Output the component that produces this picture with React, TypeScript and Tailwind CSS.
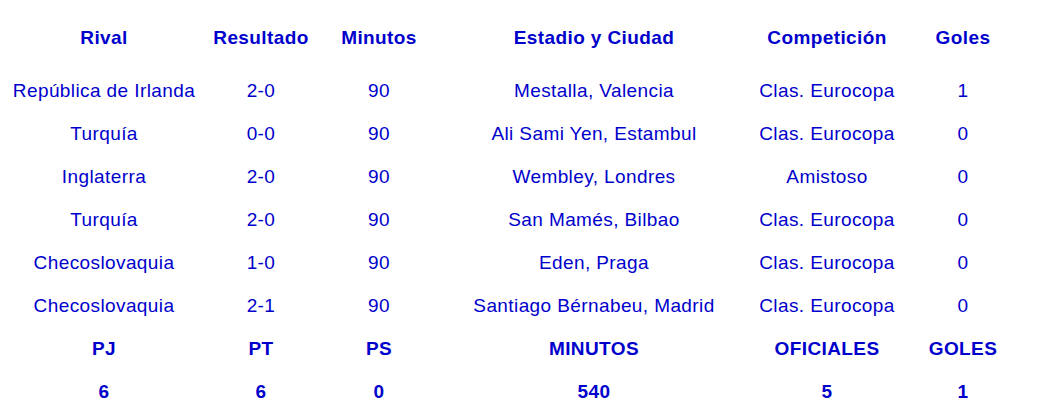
const header = ["Rival", "Resultado", "Minutos", "Estadio y Ciudad", "Competición", "Goles"];

const rows = [
  ["República de Irlanda", "2-0", "90", "Mestalla, Valencia", "Clas. Eurocopa", "1"],
  ["Turquía", "0-0", "90", "Ali Sami Yen, Estambul", "Clas. Eurocopa", "0"],
  ["Inglaterra", "2-0", "90", "Wembley, Londres", "Amistoso", "0"],
  ["Turquía", "2-0", "90", "San Mamés, Bilbao", "Clas. Eurocopa", "0"],
  ["Checoslovaquia", "1-0", "90", "Eden, Praga", "Clas. Eurocopa", "0"],
  ["Checoslovaquia", "2-1", "90", "Santiago Bérnabeu, Madrid", "Clas. Eurocopa", "0"],
];

const totalsHead = ["PJ", "PT", "PS", "MINUTOS", "OFICIALES", "GOLES"];
const totals = ["6", "6", "0", "540", "5", "1"];

const cols = "grid grid-cols-[208px_106px_130px_300px_166px_106px]";

function Row({ cells, bold, height }: { cells: string[]; bold?: boolean; height: string }) {
  return (
    <div className={`${cols} ${height} items-center`}>
      {cells.map((c, i) => (
        <div key={i} className={`text-center whitespace-nowrap ${bold ? "font-bold" : ""}`}>
          {c}
        </div>
      ))}
    </div>
  );
}

export default function App() {
  return (
    <div
      className="w-[1052px] h-[416px] bg-white text-[#0000cc] text-[19px] leading-none tracking-[0.4px] pt-[16px]"
      style={{ fontFamily: '"Liberation Sans", Arial, sans-serif' }}
    >
      <Row cells={header} bold height="h-[43px]" />
      <div className="h-[10px]" />
      {rows.map((r, i) => (
        <Row key={i} cells={r} height="h-[43px]" />
      ))}
      <Row cells={totalsHead} bold height="h-[43px]" />
      <Row cells={totals} bold height="h-[43px]" />
    </div>
  );
}
